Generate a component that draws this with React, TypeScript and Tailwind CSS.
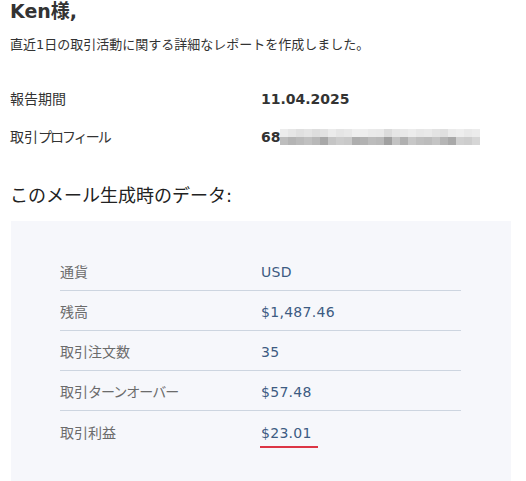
const top = ["#ececec","#e6e6e6","#e0e0e0","#e4e4e4","#dedede","#e2e2e2","#ebebeb","#e5e5e5","#e8e8e8","#efefef","#eeeeee","#eaeaea","#e9e9e9","#dcdcdc","#e6e6e6","#e8e8e8","#ececec","#e7e7e7","#e9e9e9","#e3e3e3","#e0e0e0","#ebebeb","#eeeeee","#e9e9e9","#ececec"];
const bottom = ["#bdbdbd","#b4b4b4","#bababa","#c0c0c0","#b8b8b8","#a8a8a8","#c5c5c5","#cccccc","#c9c9c9","#aeaeae","#b2b2b2","#bcbcbc","#b9b9b9","#a0a0a0","#c3c3c3","#b0b0b0","#c7c7c7","#bfbfbf","#bcbcbc","#c4c4c4","#b5b5b5","#a9a9a9","#d0d0d0","#cdcdcd","#d6d6d6"];

const Blur = () => {
	return (
		<div className="flex flex-col">
			<div className="flex">
				{top.map((c, i) => (
					<div key={i} className="w-[8px] h-[8px]" style={{ background: c }} />
				))}
			</div>
			<div className="flex">
				{bottom.map((c, i) => (
					<div key={i} className="w-[8px] h-[8px]" style={{ background: c }} />
				))}
			</div>
		</div>
	)
}

const rows = [
	{ label: <>通貨</>, value: "USD" },
	{ label: <>残高</>, value: "$1,487.46" },
	{ label: <>取引注文数</>, value: "35" },
	{ label: <>取引<span className="tracking-[-1px]">ターンオーバー</span></>, value: "$57.48" },
]

export default function App() {
	return (
		<div className="w-[526px] h-[481px] overflow-hidden bg-white px-[10px] font-['DejaVu_Sans','Noto_Sans_CJK_JP',sans-serif]">
			<h1 className="text-[19px] leading-[22px] font-bold text-[#333]">Ken様,</h1>
			<p className="mt-[13px] text-[13px] leading-[20px] text-[#333]">
				直近1日の取引活動に関する詳細なレポートを作成しました。
			</p>

			<div className="mt-[34px] flex items-center h-[20px] text-[14px] text-[#333]">
				<div className="w-[251px]">報告期間</div>
				<div className="font-bold">11.04.2025</div>
			</div>
			<div className="mt-[18px] flex items-center h-[20px] text-[14px] text-[#333]">
				<div className="w-[251px]">取引<span className="tracking-[-2px]">プロフィール</span></div>
				<div className="flex items-center">
					<span className="font-bold">68</span>
					<Blur />
				</div>
			</div>

			<h2 className="mt-[37px] text-[18px] leading-[24px] text-[#222]">このメール生成時のデータ:</h2>

			<div className="mt-[13px] ml-px w-[500px] h-[300px] bg-[#f6f7fb] pt-[30px] pl-[49px]">
				<div className="w-[401px] text-[14px]">
					{rows.map((r) => (
						<div key={r.value} className="flex items-center h-[40px] pt-[3px] border-b border-[#cdd5e0]">
							<div className="w-[201px] text-[#6b6b6b]">{r.label}</div>
							<div className="text-[#3d5b82] tracking-[0.3px]">{r.value}</div>
						</div>
					))}
					<div className="flex items-start h-[40px] pt-[12px]">
						<div className="w-[201px] text-[#6b6b6b] leading-[20px]">取引利益</div>
						<div className="-ml-px inline-block w-[58px] pl-px pb-[3px] border-b-2 border-[#dc3545] text-[#3d5b82] leading-[20px] tracking-[0.3px]">$23.01</div>
					</div>
				</div>
			</div>
		</div>
	)
}
